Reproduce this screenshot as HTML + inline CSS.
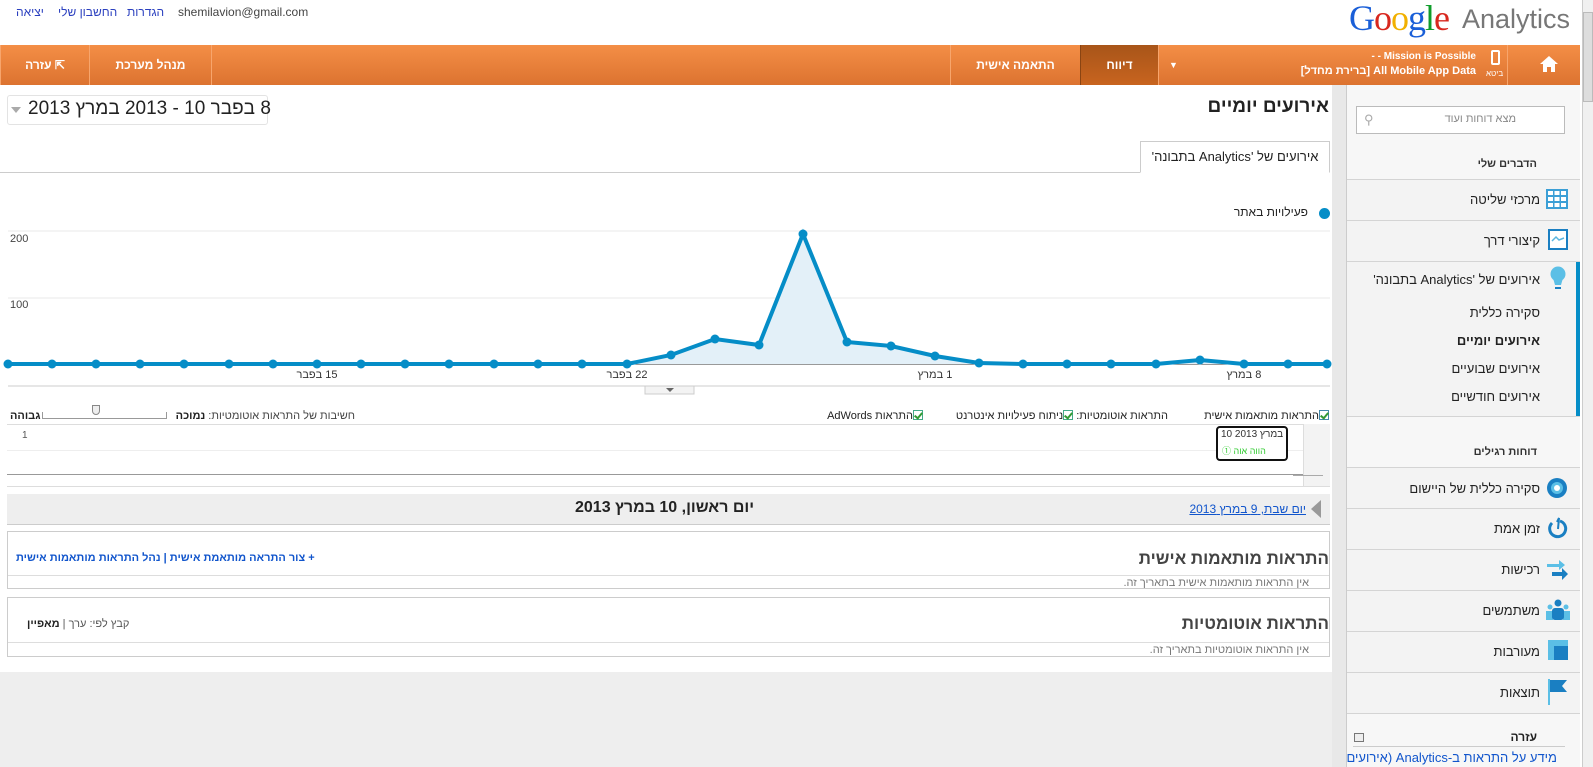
<!DOCTYPE html>
<html><head><meta charset="utf-8">
<style>
*{margin:0;padding:0;box-sizing:border-box}
body{width:1593px;height:767px;overflow:hidden;background:#fff;font-family:"Liberation Sans","Noto Sans CJK SC",sans-serif;position:relative;font-size:13px;color:#333}
.a{position:absolute}
.r{direction:rtl;white-space:nowrap}
.orange{background:linear-gradient(#f48e46,#dc7330);}
.nav{color:#fff;font-weight:bold;font-size:12px;text-align:center;line-height:40px;top:0;height:40px;border-left:1px solid #f7a56c}
.sb{left:1347px;width:233px;background:#f3f3f3;border-bottom:1px solid #d4d4d4}
.sbi{font-size:13px;color:#222;right:40px}
.cb{display:inline-block;width:10px;height:10px;border:1px solid #4a8;background:#fff;vertical-align:-1px;position:relative}
.cb:after{content:"";position:absolute;left:2px;top:0;width:3px;height:6px;border:solid #393;border-width:0 2px 2px 0;transform:rotate(40deg)}
</style></head><body>

<!-- top links -->
<div class="a r" style="left:16px;top:5px;font-size:12px;color:#2a3fbf">יציאה</div>
<div class="a r" style="left:58px;top:5px;font-size:12px;color:#2a3fbf">החשבון שלי</div>
<div class="a r" style="left:127px;top:5px;font-size:12px;color:#2a3fbf">הגדרות</div>
<div class="a" style="left:178px;top:5px;font-size:12px;color:#444">shemilavion@gmail.com</div>
<div class="a" style="left:1349px;top:-3px;font-family:'Liberation Serif',serif;font-size:36px;letter-spacing:-1px"><span style="color:#1a5fd8">G</span><span style="color:#d8281f">o</span><span style="color:#f1b000">o</span><span style="color:#1a5fd8">g</span><span style="color:#0f9d2a">l</span><span style="color:#d8281f">e</span></div>
<div class="a" style="left:1462px;top:4px;font-size:27px;color:#777">Analytics</div>

<!-- orange bar -->
<div class="a orange" style="left:0;top:45px;width:1580px;height:40px">
 <div class="a nav" style="left:0;width:89px">עזרה ⇱</div>
 <div class="a nav" style="left:89px;width:122px;border-left:1px solid #f7a56c">מנהל מערכת</div>
 <div class="a" style="left:211px;top:0;width:1px;height:40px;background:#f7a56c"></div>
 <div class="a nav" style="left:950px;width:130px">התאמה אישית</div>
 <div class="a nav" style="left:1080px;width:78px;background:linear-gradient(#a85519,#c8641f);border-left:1px solid #8a4412">דיווח</div>
 <div class="a" style="left:1158px;top:0;width:30px;height:40px;border-left:1px solid #f7a56c;color:#fff;font-size:9px;line-height:40px;text-align:center">▼</div>
 <div class="a r" style="right:104px;top:6px;color:#fff;font-weight:bold;font-size:10px">Mission is Possible - -</div>
 <div class="a r" style="right:104px;top:20px;color:#fff;font-weight:bold;font-size:11px">All Mobile App Data [ברירת מחדל]</div>
 <div class="a" style="left:1491px;top:5px;width:9px;height:15px;border:2px solid #fff;border-radius:2px"></div>
 <div class="a r" style="left:1486px;top:24px;color:#fff;font-size:8px">ביטא</div>
 <div class="a" style="left:1507px;top:0;width:1px;height:40px;background:#f7a56c"></div>
 <svg class="a" style="left:1539px;top:10px" width="20" height="18" viewBox="0 0 20 18"><path d="M10 1 L1 9 H4 V17 H8 V12 H12 V17 H16 V9 H19 Z" fill="#fff"/></svg>
</div>

<!-- main -->
<div class="a r" style="right:264px;top:96px;font-size:19px;font-weight:bold;color:#222">אירועים יומיים</div>
<div class="a" style="left:7px;top:95px;width:261px;height:30px;border:1px solid #e3e3e3;border-radius:3px;background:#fff"></div>
<div class="a r" style="left:28px;top:98px;font-size:19px;color:#222">8 בפבר 10 - 2013 במרץ 2013</div>
<div class="a" style="left:11px;top:107px;border:5px solid transparent;border-top:6px solid #aaa"></div>

<div class="a" style="left:0;top:172px;width:1330px;height:1px;background:#ccc"></div>
<div class="a r" style="left:1140px;top:141px;width:190px;height:32px;border:1px solid #ccc;border-bottom:1px solid #fff;background:#fff;font-size:13px;line-height:30px;text-align:center;color:#222">אירועים של 'Analytics בתבונה'</div>

<div class="a" style="left:1319px;top:208px;width:11px;height:11px;border-radius:50%;background:#058dc7"></div>
<div class="a r" style="right:285px;top:205px;font-size:12px;color:#222">פעילויות באתר</div>

<svg class="a" style="left:0;top:220px" width="1332" height="175">
 <line x1="8" y1="11" x2="1330" y2="11" stroke="#e8e8e8"/>
 <line x1="8" y1="78" x2="1330" y2="78" stroke="#e8e8e8"/>
 <text x="10" y="22" font-size="11" fill="#444" font-family="Liberation Sans">200</text>
 <text x="10" y="88" font-size="11" fill="#444" font-family="Liberation Sans">100</text>
 <line x1="8" y1="144" x2="1330" y2="144" stroke="#333"/>
 <polygon fill="#e3f0f8" points="627,144 671,135 715,119 759,125 803,14 847,122 891,126 935,136 979,143 1156,144 1200,140 1244,144"/>
 <polyline fill="none" stroke="#058dc7" stroke-width="4" points="8,144 52,144 96,144 140,144 184,144 229,144 273,144 317,144 361,144 405,144 449,144 494,144 538,144 582,144 627,144 671,135 715,119 759,125 803,14 847,122 891,126 935,136 979,143 1023,144 1067,144 1111,144 1156,144 1200,140 1244,144 1288,144 1327,144"/>
 <g fill="#058dc7">
 <circle cx="8" cy="144" r="4.5"/><circle cx="52" cy="144" r="4.5"/><circle cx="96" cy="144" r="4.5"/><circle cx="140" cy="144" r="4.5"/><circle cx="184" cy="144" r="4.5"/><circle cx="229" cy="144" r="4.5"/><circle cx="273" cy="144" r="4.5"/><circle cx="317" cy="144" r="4.5"/><circle cx="361" cy="144" r="4.5"/><circle cx="405" cy="144" r="4.5"/><circle cx="449" cy="144" r="4.5"/><circle cx="494" cy="144" r="4.5"/><circle cx="538" cy="144" r="4.5"/><circle cx="582" cy="144" r="4.5"/><circle cx="627" cy="144" r="4.5"/><circle cx="671" cy="135" r="4.5"/><circle cx="715" cy="119" r="4.5"/><circle cx="759" cy="125" r="4.5"/><circle cx="803" cy="14" r="4.5"/><circle cx="847" cy="122" r="4.5"/><circle cx="891" cy="126" r="4.5"/><circle cx="935" cy="136" r="4.5"/><circle cx="979" cy="143" r="4.5"/><circle cx="1023" cy="144" r="4.5"/><circle cx="1067" cy="144" r="4.5"/><circle cx="1111" cy="144" r="4.5"/><circle cx="1156" cy="144" r="4.5"/><circle cx="1200" cy="140" r="4.5"/><circle cx="1244" cy="144" r="4.5"/><circle cx="1288" cy="144" r="4.5"/><circle cx="1327" cy="144" r="4.5"/>
 </g>
 <g font-size="11" fill="#333" font-family="Liberation Sans" text-anchor="middle">
 <text x="317" y="158" direction="rtl">15 בפבר</text>
 <text x="627" y="158" direction="rtl">22 בפבר</text>
 <text x="935" y="158" direction="rtl">1 במרץ</text>
 <text x="1244" y="158" direction="rtl">8 במרץ</text>
 </g>
 <line x1="8" y1="166" x2="1330" y2="166" stroke="#ccc"/>
 <rect x="645" y="166" width="49" height="8" fill="#f3f3f3" stroke="#ccc"/>
 <path d="M666 168 L674 168 L670 172 Z" fill="#666"/>
</svg>

<!-- alerts row -->
<div class="a r" style="right:264px;top:410px;font-size:11px;color:#222"><span class="cb" style="border-color:#48a"></span>התראות מותאמות אישית</div>
<div class="a r" style="right:425px;top:410px;font-size:11px;color:#222">התראות אוטומטיות: <span class="cb"></span>ניתוח פעילויות אינטרנט</div>
<div class="a r" style="right:670px;top:410px;font-size:11px;color:#222"><span class="cb"></span>התראות AdWords</div>
<div class="a r" style="right:1238px;top:410px;font-size:11px;color:#444">חשיבות של התראות אוטומטיות: <b style="color:#222">נמוכה</b></div>
<div class="a" style="left:42px;top:412px;width:125px;height:7px;border:1px solid #999;border-top:none"></div>
<div class="a" style="left:92px;top:405px;width:8px;height:10px;border:1px solid #888;border-radius:0 0 4px 4px;background:#eee"></div>
<div class="a r" style="left:10px;top:410px;font-size:11px;font-weight:bold;color:#222">גבוהה</div>

<div class="a" style="left:7px;top:424px;width:1323px;height:1px;background:#ddd"></div>
<div class="a" style="left:22px;top:430px;font-size:10px;color:#555">1</div>
<div class="a" style="left:7px;top:450px;width:1296px;height:1px;background:#eee"></div>
<div class="a" style="left:7px;top:474px;width:1296px;height:1px;background:#999"></div>
<div class="a" style="left:1303px;top:424px;width:27px;height:62px;background:#f3f3f3;border-left:1px solid #ddd"></div>
<div class="a" style="left:1293px;top:475px;width:30px;height:1px;background:#aaa"></div>
<div class="a" style="left:7px;top:486px;width:1323px;height:1px;background:#ddd"></div>
<div class="a" style="left:1216px;top:426px;width:72px;height:35px;border:2px solid #111;border-radius:4px;background:#fff"></div>
<div class="a r" style="left:1221px;top:429px;font-size:10px;color:#333">במרץ 2013 10</div>
<div class="a r" style="left:1222px;top:444px;font-size:9px;color:#3c3">הווה אוה ①</div>

<!-- day nav -->
<div class="a" style="left:7px;top:494px;width:1323px;height:31px;background:#eee;border-bottom:1px solid #ccc"></div>
<div class="a" style="left:1311px;top:500px;width:0;height:0;border-top:9px solid transparent;border-bottom:9px solid transparent;border-right:10px solid #999"></div>
<div class="a r" style="right:287px;top:502px;font-size:12px;color:#15c;text-decoration:underline">יום שבת, 9 במרץ 2013</div>
<div class="a r" style="left:575px;top:499px;font-size:16px;font-weight:bold;color:#222">יום ראשון, 10 במרץ 2013</div>

<!-- box1 -->
<div class="a" style="left:7px;top:531px;width:1323px;height:58px;border:1px solid #ccc"></div>
<div class="a" style="left:8px;top:575px;width:1321px;height:1px;background:#ddd"></div>
<div class="a r" style="right:264px;top:549px;font-size:17px;font-weight:bold;color:#444">התראות מותאמות אישית</div>
<div class="a r" style="left:16px;top:552px;font-size:11px;font-weight:bold;color:#15c">+ צור התראה מותאמת אישית | נהל התראות מותאמות אישית</div>
<div class="a r" style="right:284px;top:577px;font-size:11px;color:#777">אין התראות מותאמות אישית בתאריך זה.</div>
<!-- box2 -->
<div class="a" style="left:7px;top:597px;width:1323px;height:60px;border:1px solid #ccc"></div>
<div class="a" style="left:8px;top:642px;width:1321px;height:1px;background:#ddd"></div>
<div class="a r" style="right:264px;top:614px;font-size:17px;font-weight:bold;color:#444">התראות אוטומטיות</div>
<div class="a r" style="left:27px;top:618px;font-size:11px;color:#555">קבץ לפי: ערך | <b style="color:#222">מאפיין</b></div>
<div class="a r" style="right:284px;top:644px;font-size:11px;color:#777">אין התראות אוטומטיות בתאריך זה.</div>

<div class="a" style="left:0;top:672px;width:1332px;height:95px;background:#eee"></div>

<!-- sidebar -->
<div class="a" style="left:1332px;top:85px;width:15px;height:682px;background:#e8e8e8;border-right:1px solid #ccc"></div>
<div class="a" style="left:1347px;top:85px;width:233px;height:682px;background:#f7f7f7"></div>
<div class="a" style="left:1356px;top:106px;width:209px;height:28px;border:1px solid #bbb;background:#fff"></div>
<div class="a r" style="right:77px;top:113px;font-size:11px;color:#888">מצא דוחות ועוד</div>
<div class="a" style="left:1364px;top:112px;font-size:13px;color:#aaa">⚲</div>
<div class="a r" style="right:56px;top:158px;font-size:11px;font-weight:bold;color:#333">הדברים שלי</div>

<div class="a sb" style="top:179px;height:42px;border-top:1px solid #d4d4d4"><div class="a r sbi" style="top:12px">מרכזי שליטה</div>
 <svg class="a" style="right:12px;top:9px" width="22" height="20"><rect width="22" height="20" fill="#3b9fd6"/><g fill="#fff"><rect x="2" y="2" width="5" height="4"/><rect x="8.5" y="2" width="5" height="4"/><rect x="15" y="2" width="5" height="4"/><rect x="2" y="8" width="5" height="4"/><rect x="8.5" y="8" width="5" height="4"/><rect x="15" y="8" width="5" height="4"/><rect x="2" y="14" width="5" height="4"/><rect x="8.5" y="14" width="5" height="4"/><rect x="15" y="14" width="5" height="4"/></g></svg></div>
<div class="a sb" style="top:221px;height:41px"><div class="a r sbi" style="top:12px">קיצורי דרך</div>
 <svg class="a" style="right:12px;top:8px" width="20" height="22"><rect x="1" y="1" width="18" height="19" fill="#fff" stroke="#1a7fc2" stroke-width="2"/><path d="M4 12 L8 8 L11 11 L16 9" stroke="#59b5e0" fill="none" stroke-width="1.5"/></svg></div>
<div class="a sb" style="top:262px;height:155px"><div class="a" style="right:0;top:0;width:4px;height:154px;background:#058dc7"></div>
 <svg class="a" style="right:14px;top:4px" width="16" height="28"><circle cx="8" cy="8" r="7.5" fill="#5bbfe6"/><path d="M3 12 L13 12 L11 19 L5 19Z" fill="#5bbfe6"/><rect x="5" y="21" width="6" height="2" fill="#1a7fc2"/></svg>
 <div class="a r sbi" style="top:10px">אירועים של 'Analytics בתבונה'</div>
 <div class="a r sbi" style="top:43px">סקירה כללית</div>
 <div class="a r sbi" style="top:71px;font-weight:bold">אירועים יומיים</div>
 <div class="a r sbi" style="top:99px">אירועים שבועיים</div>
 <div class="a r sbi" style="top:127px">אירועים חודשיים</div></div>
<div class="a r" style="right:56px;top:446px;font-size:11px;font-weight:bold;color:#333">דוחות רגילים</div>
<div class="a sb" style="top:467px;height:42px;border-top:1px solid #d4d4d4"><div class="a r sbi" style="top:13px">סקירה כללית של היישום</div>
 <svg class="a" style="right:12px;top:9px" width="22" height="22"><circle cx="11" cy="11" r="10" fill="#1a7fc2"/><circle cx="11" cy="11" r="6" fill="#5bbfe6"/><circle cx="11" cy="11" r="3" fill="#fff"/></svg></div>
<div class="a sb" style="top:509px;height:41px"><div class="a r sbi" style="top:12px">זמן אמת</div>
 <svg class="a" style="right:12px;top:8px" width="22" height="24"><path d="M6 6 A8 8 0 1 0 14 4" fill="none" stroke="#1a7fc2" stroke-width="3"/><path d="M11 5 L13 1 L12 12" stroke="#1a7fc2" stroke-width="2" fill="none"/></svg></div>
<div class="a sb" style="top:550px;height:41px"><div class="a r sbi" style="top:12px">רכישות</div>
 <svg class="a" style="right:10px;top:7px" width="24" height="24"><path d="M1 7 H13 V3 L19 8 L13 13 V10 H1Z" fill="#5bbfe6"/><path d="M6 15 H16 V11 L22 17 L16 23 V19 H6Z" fill="#1a7fc2"/></svg></div>
<div class="a sb" style="top:591px;height:41px"><div class="a r sbi" style="top:12px">משתמשים</div>
 <svg class="a" style="right:10px;top:8px" width="24" height="22"><circle cx="12" cy="4" r="3.5" fill="#1a7fc2"/><circle cx="4" cy="8" r="2.5" fill="#5bbfe6"/><circle cx="20" cy="8" r="2.5" fill="#5bbfe6"/><rect x="0" y="12" width="7" height="9" fill="#5bbfe6"/><rect x="17" y="12" width="7" height="9" fill="#5bbfe6"/><rect x="6" y="9" width="12" height="12" rx="3" fill="#1a7fc2"/></svg></div>
<div class="a sb" style="top:632px;height:41px"><div class="a r sbi" style="top:12px">מעורבות</div>
 <svg class="a" style="right:12px;top:8px" width="20" height="20"><rect width="20" height="20" fill="#5bbfe6"/><rect x="6" y="6" width="14" height="14" fill="#1a7fc2"/></svg></div>
<div class="a sb" style="top:673px;height:41px"><div class="a r sbi" style="top:12px">תוצאות</div>
 <svg class="a" style="right:12px;top:6px" width="20" height="26"><rect x="0" y="0" width="2" height="26" fill="#5bbfe6"/><path d="M2 1 H19 L14 7 L19 13 H2Z" fill="#1a7fc2"/></svg></div>
<div class="a r" style="right:56px;top:730px;font-size:12px;font-weight:bold;color:#222">עזרה</div>
<div class="a" style="left:1353px;top:746px;width:212px;height:1px;background:#ccc"></div>
<div class="a" style="left:1354px;top:733px;width:10px;height:9px;border:1px solid #777;background:#eee"></div>
<div class="a r" style="right:36px;top:750px;font-size:13px;color:#15c">מידע על התראות ב-Analytics (אירועים</div>

<!-- scrollbar -->
<div class="a" style="left:1582px;top:0;width:11px;height:767px;background:#f0f0f0;border-left:1px solid #ccc"></div>
<div class="a" style="left:1583px;top:12px;width:10px;height:90px;background:#ddd;border:1px solid #bbb"></div>
</body></html>
